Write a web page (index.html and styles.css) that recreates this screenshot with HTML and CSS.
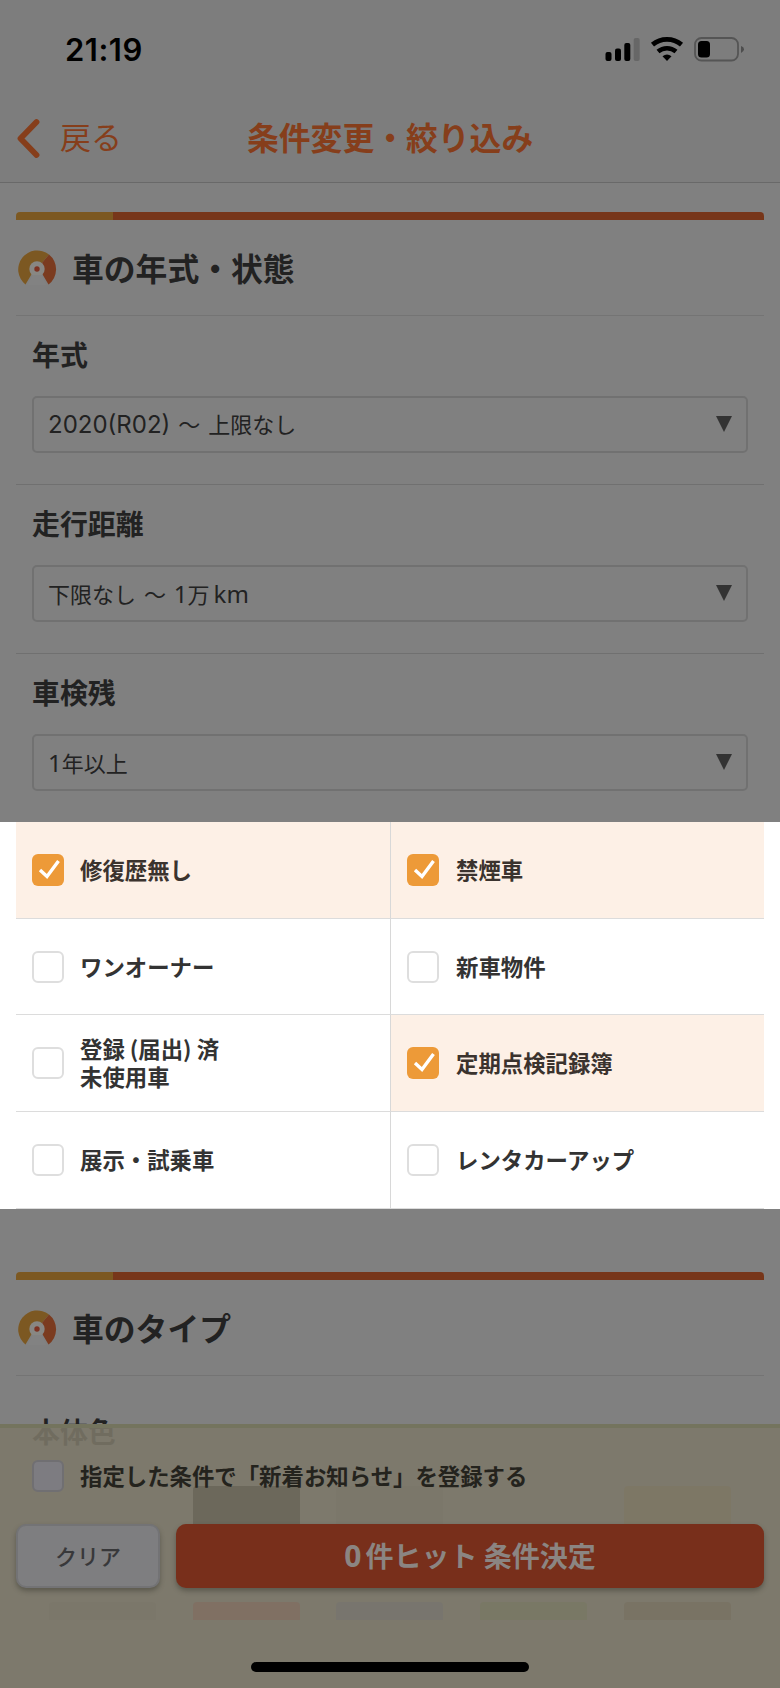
FILE: index.html
```html
<!DOCTYPE html>
<html lang="ja">
<head>
<meta charset="utf-8">
<title>条件変更・絞り込み</title>
<link rel="stylesheet" href="styles.css">
</head>
<body>
<svg class="defs" width="0" height="0" aria-hidden="true">
  <symbol id="logo" viewBox="0 0 40 38">
    <path fill="#7c5822" d="M8.500 35.500A19 19 0 0 1 32 5.500L24.500 14.500A7.500 7.500 0 0 0 15 24.500Z"/>
    <path fill="#7b3b1f" d="M32 5.500A19 19 0 0 1 31.500 35.500L25 24.500A7.500 7.500 0 0 0 24.500 14.500Z"/>
    <circle cx="20" cy="20" r="7.700" fill="#888783"/>
    <path fill="#828282" d="M16 26H24L29 36H11Z"/>
    <circle cx="20" cy="20" r="2.700" fill="#7d3222"/>
  </symbol>
  <symbol id="tick" viewBox="0 0 32 32">
    <path d="M8 16L15 22.500L26.500 7" fill="none" stroke="#fff" stroke-width="3.400"/>
  </symbol>
</svg>
<div class="phone">
  <header class="top">
    <div class="status">
      <span class="time">21:19</span>
      <svg class="status-icons" width="140" height="26" viewBox="0 0 140 26">
        <rect x="0.500" y="15" width="6" height="9" rx="2"/>
        <rect x="10" y="11.500" width="6" height="12.500" rx="2"/>
        <rect x="19.300" y="6" width="6" height="18" rx="2"/>
        <rect x="28.700" y="1" width="6" height="23" rx="2" fill="#676767"/>
        <path d="M47.500 7.700A22.500 22.500 0 0 1 76.500 7.700" fill="none" stroke="#000" stroke-width="4.800"/>
        <path d="M53 14.500A14 14 0 0 1 71 14.500" fill="none" stroke="#000" stroke-width="4.500"/>
        <path d="M57.500 19.300Q62 15.700 66.500 19.300L62 24Z"/>
        <rect x="90" y="1" width="43" height="22.500" rx="6.500" fill="none" stroke="#555" stroke-width="1.800"/>
        <rect x="93" y="4" width="12" height="16.500" rx="3.500"/>
        <path d="M136 9Q139 10 139 12.300T136 16Z" fill="#4d4d4d"/>
      </svg>
    </div>
    <nav class="nav">
      <svg class="chevron" width="24" height="40" viewBox="0 0 24 40"><path d="M20.500 4L4.500 20.500L20.500 37" fill="none" stroke="#863e1b" stroke-width="5.800" stroke-linecap="round" stroke-linejoin="round"/></svg>
      <span class="back">戻る</span>
      <h1 class="title">条件変更・絞り込み</h1>
    </nav>
  </header>

  <section class="section">
    <div class="band"></div>
    <h2 class="section-title"><svg class="logo"><use href="#logo"/></svg><span>車の年式・状態</span></h2>
    <div class="field">
      <h3 class="label">年式</h3>
      <div class="select"><span><span class="sans">2020(R02)</span> 〜 上限なし</span><i class="arrow"></i></div>
    </div>
    <div class="field">
      <h3 class="label">走行距離</h3>
      <div class="select"><span>下限なし 〜 <span class="noto">1</span>万<span class="noto km">km</span></span><i class="arrow"></i></div>
    </div>
    <div class="field last">
      <h3 class="label">車検残</h3>
      <div class="select"><span><span class="noto">1</span>年以上</span><i class="arrow"></i></div>
    </div>
  </section>

  <section class="spotlight">
    <div class="options">
      <div class="option on"><svg class="box"><use href="#tick"/></svg><span>修復歴無し</span></div>
      <div class="option on"><svg class="box"><use href="#tick"/></svg><span>禁煙車</span></div>
      <div class="option"><i class="box"></i><span>ワンオーナー</span></div>
      <div class="option"><i class="box"></i><span>新車物件</span></div>
      <div class="option"><i class="box"></i><span>登録 (届出) 済<br>未使用車</span></div>
      <div class="option on"><svg class="box"><use href="#tick"/></svg><span>定期点検記録簿</span></div>
      <div class="option"><i class="box"></i><span>展示・試乗車</span></div>
      <div class="option"><i class="box"></i><span>レンタカーアップ</span></div>
    </div>
  </section>

  <section class="section types">
    <div class="band"></div>
    <h2 class="section-title"><svg class="logo"><use href="#logo"/></svg><span>車のタイプ</span></h2>
    <h3 class="label color-label">本体色</h3>
    <div class="swatches">
      <i class="swatch pearl"></i><i class="swatch black"></i><i class="swatch silver"></i><i class="swatch pearl"></i><i class="swatch gold"></i>
      <i class="swatch gray"></i><i class="swatch red"></i><i class="swatch blue"></i><i class="swatch green"></i><i class="swatch brown"></i>
    </div>
  </section>

  <footer class="footer">
    <div class="notify"><i class="box"></i><span>指定した条件で「新着お知らせ」を登録する</span></div>
    <div class="actions">
      <div class="button clear"><span>クリア</span></div>
      <div class="button submit"><span><span class="zero">0</span>件ヒット 条件決定</span></div>
    </div>
    <div class="home"></div>
  </footer>
</div>
</body>
</html>
```
FILE: styles.css
```css
* { box-sizing: border-box; }
body {
  margin: 0;
  background: #808080;
  color: #222;
  font-family: "Noto Sans CJK JP", sans-serif;
}
h1, h2, h3 { margin: 0; }
.defs { display: block; height: 0; }
.phone {
  position: relative;
  display: flex;
  flex-direction: column;
  width: 780px;
  height: 1688px;
  overflow: hidden;
}

/* Status bar and navigation */
.top { height: 183px; background: #7d7d7d; border-bottom: 1px solid #696969; }
.status {
  display: flex;
  justify-content: space-between;
  align-items: center;
  height: 100px;
  padding: 0 35px 0 65px;
}
.time { font: 600 31px/40px Inter, sans-serif; letter-spacing: .5px; color: #000; }
.nav {
  display: grid;
  grid-template-columns: 44px 186px auto;
  align-items: center;
  height: 76px;
  padding-left: 16px;
  color: #863e1b;
}
.back { padding-bottom: 4px; font-size: 31px; line-height: 40px; }
.title { padding: 0 0 4px 1px; font-size: 31.800px; line-height: 40px; font-weight: 700; white-space: nowrap; }

/* Form sections */
.section { padding: 29px 16px 0; height: 639px; }
.band {
  height: 8px;
  border-radius: 4px 4px 0 0;
  background: linear-gradient(to right, #7c5821 97px, #77361a 97px);
}
.section-title {
  display: flex;
  align-items: center;
  gap: 15px;
  height: 96px;
  border-bottom: 1px solid #747474;
  font-size: 31.800px;
  line-height: 40px;
}
.section-title span { padding-bottom: 2px; }
.logo { width: 40px; height: 38px; margin-left: 1px; }
.field { height: 169px; padding: 18px 16px 0; border-bottom: 1px solid #707070; }
.field.last { border: 0; }
.label { font-size: 27.900px; line-height: 40px; }
.select {
  display: flex;
  align-items: center;
  justify-content: space-between;
  height: 57px;
  margin-top: 22px;
  padding: 0 14px 1px 14px;
  border: 2px solid #717171;
  border-radius: 5px;
  font-size: 22px;
  line-height: 30px;
  word-spacing: 3px;
}
.sans { font: 24px/30px Inter, sans-serif; }
.noto { font: 24px/30px "Noto Sans", sans-serif; }
.km { margin-left: 4px; }
.arrow { width: 16px; height: 16px; background: #333; clip-path: polygon(0 0, 100% 0, 50% 100%); }

/* Highlighted option grid */
.spotlight { height: 387px; padding: 0 16px; background: #fff; }
.options { display: grid; grid-template-columns: 375px 373px; grid-template-rows: 97px 96px 97px 97px; }
.option {
  display: flex;
  align-items: center;
  gap: 16px;
  padding-left: 16px;
  border-bottom: 1px solid #dcdcdc;
  font-size: 22.400px;
  line-height: 28px;
  font-weight: 700;
  color: #333;
}
.option span { padding-bottom: 2px; }
.option:nth-child(odd) { border-right: 1px solid #d8d8d8; }
.option:nth-child(even) { gap: 17px; }
.option.on { background: #fdf0e6; color: #3b332e; }
.box { flex: none; width: 32px; height: 32px; border: 2px solid #dedede; border-radius: 6px; background: #fff; }
.on .box { border: 0; background: #ed9a38; }

/* Vehicle type section */
.types { height: 479px; padding-top: 63px; }
.color-label { margin: 35px 16px 0; }
.swatches {
  display: grid;
  grid-template-columns: repeat(5, 107px);
  grid-template-rows: 60px 18px;
  gap: 56px 36.700px;
  padding: 35px 33px 0;
}
.swatch { border-radius: 4px 4px 0 0; }
.pearl { background: #848280; }
.black { background: #000; }
.silver { background: #777; }
.gold { background: #807252; }
.gray { background: #777; }
.red { background: #973e42; }
.blue { background: #5d6990; }
.green { background: #657d4e; }
.brown { background: #665645; }

/* Bottom action bar */
.footer {
  position: absolute;
  left: 0;
  bottom: 0;
  width: 780px;
  height: 264px;
  padding: 32px 16px 0;
  border-top: 4px solid #74745e;
  background: rgba(124, 120, 104, .87);
  background-clip: padding-box;
}
.notify {
  display: flex;
  align-items: center;
  gap: 16px;
  height: 32px;
  padding-left: 16px;
  font-size: 22.400px;
  line-height: 28px;
  font-weight: 700;
  color: #24231d;
}
.notify span { padding-bottom: 3px; }
.notify .box { background: #7d7c81; border-color: #706f72; }
.actions { display: grid; grid-template-columns: 144px 588px; gap: 16px; margin-top: 32px; }
.button {
  display: flex;
  align-items: center;
  justify-content: center;
  height: 64px;
  border-radius: 10px;
  font-weight: 700;
  box-shadow: 0 3px 5px rgba(50, 50, 42, .45);
}
.button > span { padding-bottom: 3px; }
.clear { background: #7e7e80; border: 2px solid #737375; color: #38383a; font-size: 22px; font-weight: 500; }
.submit { background: #782f1b; color: #8b8582; font-size: 28px; }
.zero { margin-right: 4px; font: 700 30px/30px "Noto Sans", sans-serif; }
.home { width: 278px; height: 10px; margin: 74px auto 0; border-radius: 5px; background: #000; }
```
